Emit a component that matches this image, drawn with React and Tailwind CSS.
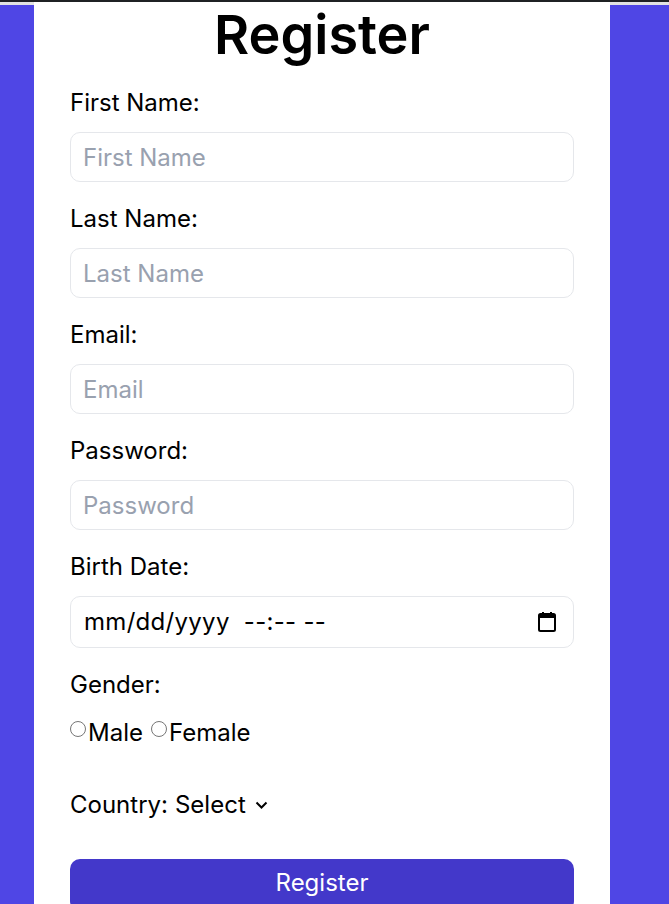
import { useState } from "react";

// ===============================
// FIELD
// ===============================
function Field({ label, type = "text", placeholder }) {
  return (
    <div className="mb-[19px]">
      <label className="block text-2xl pt-0.5 mb-[13px]">{label}</label>
      <input
        type={type}
        placeholder={placeholder}
        className="w-full h-[50px] px-3 border border-gray-200 rounded-[10px] text-2xl placeholder:text-gray-400 outline-none"
      />
    </div>
  );
}

function CalendarIcon() {
  return (
    <svg width="20" height="22" viewBox="0 0 20 22" fill="none">
      <rect x="2" y="3" width="16" height="17" rx="1.5" stroke="black" strokeWidth="2" />
      <rect x="2" y="3" width="16" height="4" fill="black" />
      <rect x="5" y="1" width="2" height="4" fill="black" />
      <rect x="13" y="1" width="2" height="4" fill="black" />
    </svg>
  );
}

// ===============================
// MAIN PAGE
// ===============================
export default function App() {
  const [gender, setGender] = useState("");

  const radio =
    "appearance-none shrink-0 w-4 h-4 mt-1 rounded-full border border-[#767676] bg-white checked:border-[5px] checked:border-[#4338ca]";

  return (
    <div
      className="h-screen bg-[#4f46e5] text-black overflow-hidden"
      style={{ fontFamily: "Inter, 'Noto Sans', sans-serif" }}
    >
      <div className="h-[2px] bg-[#1f2124]" />
      <div className="h-[3px] bg-[#e3e3e3]" />
      <div className="-mt-[3px] ml-[34px] w-[576px] bg-white px-9 pb-4">
        <h1 className="text-[54px] font-semibold text-center pt-[5px] pb-[22px] leading-[56px]">Register</h1>

        <Field label="First Name:" placeholder="First Name" />
        <Field label="Last Name:" placeholder="Last Name" />
        <Field label="Email:" type="email" placeholder="Email" />
        <Field label="Password:" type="password" placeholder="Password" />

        <div className="mb-[21px]">
          <label className="block text-2xl pt-0.5 mb-[13px]">Birth Date:</label>
          <div className="w-full h-[52px] pl-[13px] pr-4 border border-gray-200 rounded-[10px] text-2xl flex items-center justify-between">
            <span className="tracking-[0.3px]">mm/dd/yyyy&nbsp; --:-- --</span>
            <CalendarIcon />
          </div>
        </div>

        <div className="mb-10">
          <label className="block text-2xl mb-4">Gender:</label>
          <div className="flex items-start text-2xl">
            <input
              type="radio"
              name="gender"
              checked={gender === "male"}
              onChange={() => setGender("male")}
              className={radio}
            />
            <span className="ml-0.5 mr-2">Male</span>
            <input
              type="radio"
              name="gender"
              checked={gender === "female"}
              onChange={() => setGender("female")}
              className={radio}
            />
            <span className="ml-0.5">Female</span>
          </div>
        </div>

        <div className="flex items-center text-2xl mb-[38px]">
          <label className="mr-[7px]">Country:</label>
          <select className="w-[72px] appearance-none text-2xl bg-transparent outline-none">
            <option>Select</option>
            <option>USA</option>
            <option>India</option>
          </select>
          <svg width="13" height="8" viewBox="0 0 13 8" fill="none" className="ml-2">
            <polyline points="1.5,1.5 6.5,6.5 11.5,1.5" stroke="black" strokeWidth="2" />
          </svg>
        </div>

        <button className="w-full h-[52px] pb-1 bg-[#4338ca] text-white text-2xl rounded-[10px]">Register</button>
      </div>
    </div>
  );
}
